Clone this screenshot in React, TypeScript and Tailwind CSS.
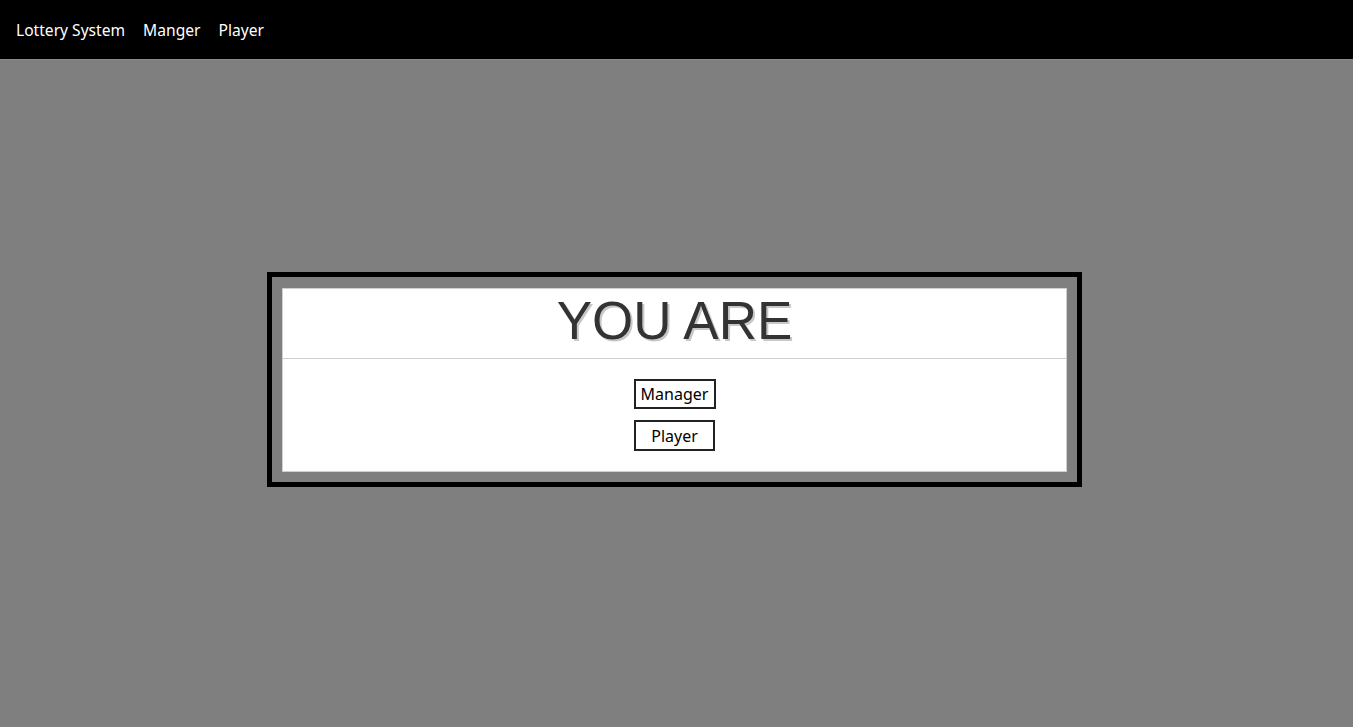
export default function App() {
  return (
    <div className="min-h-[727px] bg-[#7f7f7f] font-['Noto_Sans',sans-serif]">
      <nav className="flex h-[60px] items-center gap-[18px] border-b border-[#8c8c8c] bg-black pl-4 pt-[3px] text-[15.6px] text-white">
        <span>Lottery System</span>
        <span>Manger</span>
        <span>Player</span>
      </nav>

      <div className="flex justify-center pt-[212px]">
        <div className="mr-1 w-[815px] border-[5px] border-black px-[10px] pb-[10px] pt-[11px]">
          <div className="border border-[#cfcfcf] bg-white">
            <div className="flex h-[70px] items-center justify-center border-b border-[#cfcfcf] pb-[7px]">
              <h1 className="font-['Liberation_Sans',Arial,sans-serif] text-[53px] leading-none text-[#333] [text-shadow:2px_2px_0_#c8c8c8]">
                YOU ARE
              </h1>
            </div>
            <div className="flex flex-col items-center gap-[11px] py-5">
              <button className="h-[30px] w-[82px] border-2 border-[#222] bg-white text-[16px] text-black">
                Manager
              </button>
              <button className="h-[31px] w-[81px] border-2 border-[#222] bg-white text-[16px] text-black">
                Player
              </button>
            </div>
          </div>
        </div>
      </div>
    </div>
  );
}
